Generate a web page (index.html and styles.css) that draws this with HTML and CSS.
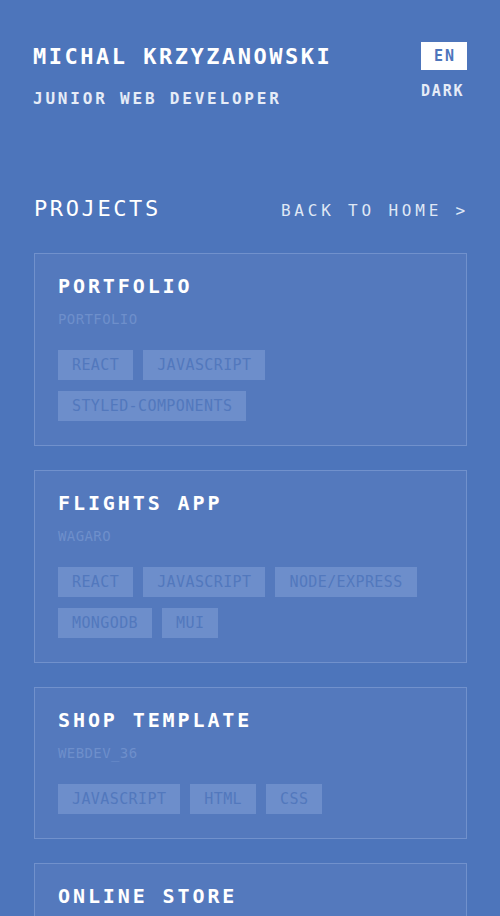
FILE: index.html
```html
<!DOCTYPE html>
<html lang="en">
  <head>
    <meta charset="UTF-8" />
    <meta name="viewport" content="width=device-width, initial-scale=1.0" />
    <title>Projects</title>
    <link rel="stylesheet" href="styles.css">
  </head>
  <body>
    <div class="page">
      <header class="header">
        <div class="intro">
          <h1 class="name">Michal Krzyzanowski</h1>
          <p class="role">Junior Web Developer</p>
        </div>
        <div class="switches">
          <button class="lang">EN</button>
          <button class="theme">Dark</button>
        </div>
      </header>

      <div class="projects-head">
        <h2>Projects</h2>
        <a href="#" class="back">Back to home &gt;</a>
      </div>

      <div class="project">
        <h3>Portfolio</h3>
        <p class="repo">portfolio</p>
        <ul class="tags">
          <li>React</li>
          <li>JavaScript</li>
          <li>styled-components</li>
        </ul>
      </div>

      <div class="project">
        <h3>Flights app</h3>
        <p class="repo">wagaro</p>
        <ul class="tags">
          <li>React</li>
          <li>JavaScript</li>
          <li>Node/Express</li>
          <li>MongoDB</li>
          <li>MUI</li>
        </ul>
      </div>

      <div class="project">
        <h3>Shop template</h3>
        <p class="repo">webdev_36</p>
        <ul class="tags">
          <li>JavaScript</li>
          <li>HTML</li>
          <li>CSS</li>
        </ul>
      </div>

      <div class="project">
        <h3>Online store</h3>
      </div>
    </div>
  </body>
</html>
```
FILE: styles.css
```css
body {
  font-family: "DejaVu Sans Mono", "Liberation Mono", monospace;
  margin: 0;
  padding: 0;
  background-color: #4d75bb;
  color: #ffffff;
  text-transform: uppercase;
}

.page {
  padding: 42px 33px 40px 33px;
}

.header {
  display: flex;
  justify-content: space-between;
  align-items: flex-start;
}

.intro {
  padding-top: 1px;
}

.name {
  margin: 0;
  font-size: 22px;
  line-height: 28px;
  letter-spacing: 2.5px;
  font-weight: bold;
}

.role {
  margin: 18px 0 0 0;
  font-size: 16px;
  line-height: 20px;
  letter-spacing: 2.8px;
  font-weight: bold;
  color: #e6ecf7;
}

.switches {
  display: flex;
  flex-direction: column;
  align-items: flex-start;
}

.switches button {
  font-family: inherit;
  text-transform: uppercase;
  font-weight: bold;
  border: none;
  cursor: pointer;
  padding: 0;
}

.lang {
  width: 46px;
  height: 28px;
  background-color: #ffffff;
  color: #4d75bb;
  font-size: 15px;
  letter-spacing: 2px;
  padding-left: 2px !important;
}

.theme {
  margin-top: 12px;
  background: none;
  color: #e6ecf7;
  font-size: 15px;
  line-height: 18px;
  letter-spacing: 1.8px;
}

.projects-head {
  display: flex;
  justify-content: space-between;
  align-items: baseline;
  margin-top: 86px;
  padding-left: 1px;
}

.projects-head h2 {
  margin: 0;
  font-size: 22px;
  line-height: 28px;
  letter-spacing: 2.6px;
  font-weight: normal;
}

.back {
  color: #dfe7f5;
  text-decoration: none;
  font-size: 16px;
  letter-spacing: 3.8px;
  margin-right: -2px;
}

.project {
  margin: 30px 0 0 1px;
  padding: 20px 23px 24px 23px;
  background-color: #5479bd;
  border: 1px solid #7191cc;
}

.project + .project {
  margin-top: 24px;
}

.project h3 {
  margin: 0;
  font-size: 20px;
  line-height: 24px;
  letter-spacing: 2.9px;
  font-weight: bold;
}

.repo {
  margin: 12px 0 0 0;
  font-size: 14px;
  line-height: 18px;
  letter-spacing: 0.4px;
  color: #6e8fcb;
}

.tags {
  list-style: none;
  margin: 22px 0 0 0;
  padding: 0;
  display: flex;
  flex-wrap: wrap;
  gap: 11px 10px;
}

.tags li {
  height: 30px;
  line-height: 30px;
  padding: 0 14px;
  font-size: 15px;
  letter-spacing: 0.4px;
  background-color: #6d8ecb;
  color: #5278bd;
}
```
